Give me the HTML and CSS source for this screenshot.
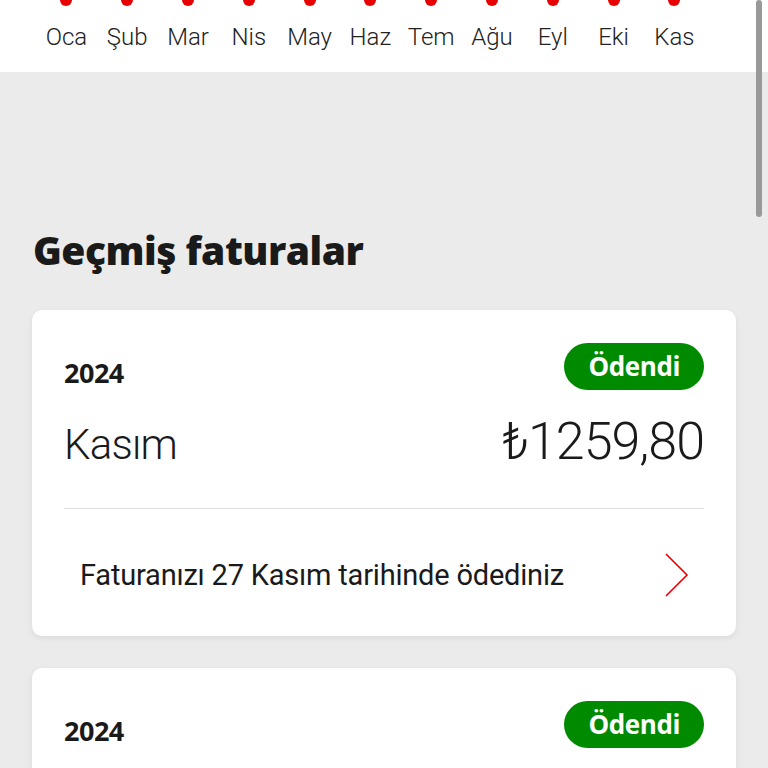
FILE: index.html
```html
<!DOCTYPE html>
<html lang="tr">
<head>
    <meta charset="UTF-8">
    <meta name="viewport" content="width=device-width, initial-scale=1.0">
    <link rel="stylesheet" href="styles.css">
    <title>Faturalar</title>
</head>
<body>

<div class="months">
    <div class="month"><span class="dot"></span><span>Oca</span></div>
    <div class="month"><span class="dot"></span><span>Şub</span></div>
    <div class="month"><span class="dot"></span><span>Mar</span></div>
    <div class="month"><span class="dot"></span><span>Nis</span></div>
    <div class="month"><span class="dot"></span><span>May</span></div>
    <div class="month"><span class="dot"></span><span>Haz</span></div>
    <div class="month"><span class="dot"></span><span>Tem</span></div>
    <div class="month"><span class="dot"></span><span>Ağu</span></div>
    <div class="month"><span class="dot"></span><span>Eyl</span></div>
    <div class="month"><span class="dot"></span><span>Eki</span></div>
    <div class="month"><span class="dot"></span><span>Kas</span></div>
</div>

<div class="content">
    <h1 class="title">Geçmiş faturalar</h1>

    <div class="bill-card">
        <div class="bill-head">
            <span class="year">2024</span>
            <span class="badge">Ödendi</span>
        </div>
        <div class="bill-amount">
            <span class="month-name">Kasım</span>
            <span class="amount">₺1259,80</span>
        </div>
        <div class="bill-foot">
            <span>Faturanızı 27 Kasım tarihinde ödediniz</span>
            <svg class="chevron" width="26" height="44" viewBox="0 0 26 44">
                <path d="M2 1 L23 22 L2 43" fill="none" stroke="#e60000" stroke-width="1.6"/>
            </svg>
        </div>
    </div>

    <div class="bill-card">
        <div class="bill-head">
            <span class="year">2024</span>
            <span class="badge">Ödendi</span>
        </div>
    </div>
</div>

<div class="scrollbar"></div>

</body>
</html>
```

FILE: styles.css
```css
body {
    margin: 0;
    background: #ebebeb;
    font-family: "Roboto", sans-serif;
    color: #1a1a1a;
    overflow: hidden;
    height: 768px;
    position: relative;
}

.months {
    background: #fff;
    height: 72px;
    display: flex;
    padding-left: 36px;
}

.month {
    width: 60.8px;
    display: flex;
    flex-direction: column;
    align-items: center;
    font-size: 24px;
    font-weight: 300;
    color: #222;
}

.month .dot {
    width: 12px;
    height: 12px;
    border-radius: 50%;
    background: #e60000;
    margin-top: -6px;
    margin-bottom: 17px;
}

.content {
    padding: 0 32px;
}

.title {
    margin: 153px 0 0 1px;
    font-family: "Open Sans", sans-serif;
    font-size: 39px;
    font-weight: 800;
    letter-spacing: -0.5px;
    line-height: 50px;
}

.bill-card {
    background: #fff;
    border-radius: 10px;
    box-shadow: 0 2px 6px rgba(0, 0, 0, 0.08);
    padding: 32px 32px 0;
    margin-top: 35px;
}

.bill-card + .bill-card {
    margin-top: 32px;
    height: 200px;
}

.bill-head {
    display: flex;
    justify-content: space-between;
    align-items: center;
}

.year {
    font-family: "Open Sans", sans-serif;
    font-size: 27px;
    font-weight: 700;
    letter-spacing: -0.5px;
    padding-top: 12px;
}

.badge {
    background: #008a00;
    color: #fff;
    font-family: "Open Sans", sans-serif;
    font-size: 26px;
    font-weight: 700;
    height: 47px;
    line-height: 46px;
    padding: 0 24px;
    border-radius: 24px;
    letter-spacing: -0.4px;
}

.bill-amount {
    display: flex;
    justify-content: space-between;
    align-items: baseline;
    padding: 20px 0 36px;
    border-bottom: 1px solid #dedede;
}

.month-name {
    font-size: 42px;
    font-weight: 300;
    letter-spacing: -0.8px;
}

.amount {
    font-size: 52px;
    font-weight: 300;
    letter-spacing: -1px;
}

.bill-foot {
    display: flex;
    justify-content: space-between;
    align-items: center;
    padding: 4px 14px 0 16px;
    height: 123px;
    font-size: 29px;
    letter-spacing: -0.2px;
}

.scrollbar {
    position: absolute;
    top: 0;
    right: 6px;
    width: 6px;
    height: 217px;
    background: #999;
    border-radius: 3px;
}
```
